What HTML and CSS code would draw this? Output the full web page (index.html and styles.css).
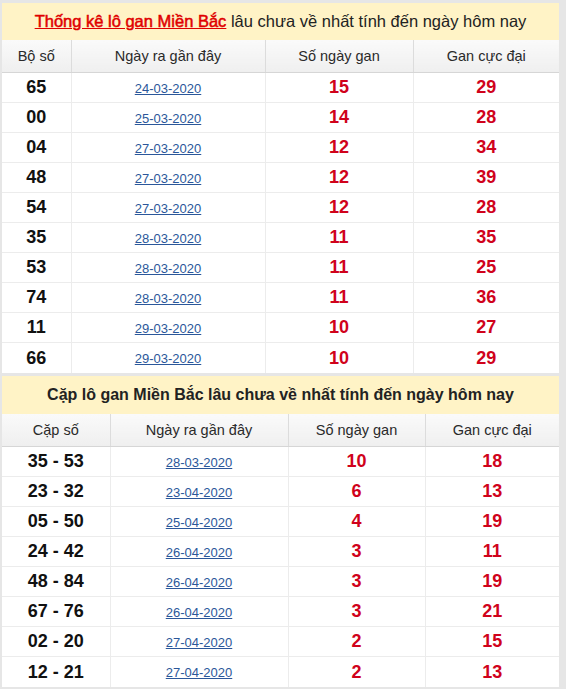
FILE: index.html
```html
<!DOCTYPE html>
<html lang="vi">
<head>
<meta charset="utf-8">
<link rel="stylesheet" href="styles.css">
</head>
<body>
<div class="page">
  <section class="block">
    <div class="title"><a class="title-link">Thống kê lô gan Miền Bắc</a> lâu chưa về nhất tính đến ngày hôm nay</div>
    <table class="grid">
      <colgroup><col class="c1a"><col class="c2a"><col class="c3a"><col class="c4a"></colgroup>
      <thead><tr><th>Bộ số</th><th>Ngày ra gần đây</th><th>Số ngày gan</th><th>Gan cực đại</th></tr></thead>
      <tbody>
        <tr><td class="num">65</td><td><a class="date">24-03-2020</a></td><td class="red">15</td><td class="red">29</td></tr>
        <tr><td class="num">00</td><td><a class="date">25-03-2020</a></td><td class="red">14</td><td class="red">28</td></tr>
        <tr><td class="num">04</td><td><a class="date">27-03-2020</a></td><td class="red">12</td><td class="red">34</td></tr>
        <tr><td class="num">48</td><td><a class="date">27-03-2020</a></td><td class="red">12</td><td class="red">39</td></tr>
        <tr><td class="num">54</td><td><a class="date">27-03-2020</a></td><td class="red">12</td><td class="red">28</td></tr>
        <tr><td class="num">35</td><td><a class="date">28-03-2020</a></td><td class="red">11</td><td class="red">35</td></tr>
        <tr><td class="num">53</td><td><a class="date">28-03-2020</a></td><td class="red">11</td><td class="red">25</td></tr>
        <tr><td class="num">74</td><td><a class="date">28-03-2020</a></td><td class="red">11</td><td class="red">36</td></tr>
        <tr><td class="num">11</td><td><a class="date">29-03-2020</a></td><td class="red">10</td><td class="red">27</td></tr>
        <tr><td class="num">66</td><td><a class="date">29-03-2020</a></td><td class="red">10</td><td class="red">29</td></tr>
      </tbody>
    </table>
  </section>
  <section class="block">
    <div class="title title-bold">Cặp lô gan Miền Bắc lâu chưa về nhất tính đến ngày hôm nay</div>
    <table class="grid">
      <colgroup><col class="c1b"><col class="c2b"><col class="c3b"><col class="c4b"></colgroup>
      <thead><tr><th>Cặp số</th><th>Ngày ra gần đây</th><th>Số ngày gan</th><th>Gan cực đại</th></tr></thead>
      <tbody>
        <tr><td class="num">35 - 53</td><td><a class="date">28-03-2020</a></td><td class="red">10</td><td class="red">18</td></tr>
        <tr><td class="num">23 - 32</td><td><a class="date">23-04-2020</a></td><td class="red">6</td><td class="red">13</td></tr>
        <tr><td class="num">05 - 50</td><td><a class="date">25-04-2020</a></td><td class="red">4</td><td class="red">19</td></tr>
        <tr><td class="num">24 - 42</td><td><a class="date">26-04-2020</a></td><td class="red">3</td><td class="red">11</td></tr>
        <tr><td class="num">48 - 84</td><td><a class="date">26-04-2020</a></td><td class="red">3</td><td class="red">19</td></tr>
        <tr><td class="num">67 - 76</td><td><a class="date">26-04-2020</a></td><td class="red">3</td><td class="red">21</td></tr>
        <tr><td class="num">02 - 20</td><td><a class="date">27-04-2020</a></td><td class="red">2</td><td class="red">15</td></tr>
        <tr><td class="num">12 - 21</td><td><a class="date">27-04-2020</a></td><td class="red">2</td><td class="red">13</td></tr>
      </tbody>
    </table>
  </section>
</div>
</body>
</html>
```

FILE: styles.css
```css
html, body {
  margin: 0;
  padding: 0;
  background: #e6e6e6;
}
body {
  font-family: "Liberation Sans", Arial, sans-serif;
  color: #222;
}
.page {
  padding: 3px 0 0 2px;
  width: 557px;
  display: flex;
  flex-direction: column;
  gap: 3px;
}
.block {
  background: #fff;
}
.title {
  background: #fff3c6;
  height: 37px;
  line-height: 37px;
  text-align: center;
  font-size: 16.5px;
  color: #222;
  white-space: nowrap;
}
.title-link {
  color: #e00000;
  font-weight: normal;
  -webkit-text-stroke: 0.5px #e00000;
  text-decoration: underline;
}
.title-bold {
  font-weight: bold;
  height: 38px;
  line-height: 38px;
  font-size: 16px;
}
.grid {
  width: 557px;
  border-collapse: collapse;
  table-layout: fixed;
}
.c1a { width: 69px; }
.c2a { width: 194px; }
.c3a { width: 148px; }
.c4a { width: 146px; }
.c1b { width: 108px; }
.c2b { width: 178px; }
.c3b { width: 137px; }
.c4b { width: 134px; }
.grid th {
  height: 32px;
  padding: 0;
  font-size: 14.5px;
  font-weight: normal;
  color: #2a2a2a;
  background: linear-gradient(#fafafa, #efefef);
  border-left: 1px solid #dcdcdc;
  border-bottom: 1px solid #d6d6d6;
}
.grid th:first-child { border-left: none; }
.grid td {
  height: 29px;
  padding: 0;
  text-align: center;
  border-left: 1px solid #ececec;
  border-bottom: 1px solid #ececec;
}
.grid td:first-child { border-left: none; }
.grid tr:last-child td { border-bottom: none; height: 30px; }
.num {
  font-size: 18px;
  font-weight: bold;
  color: #111;
}
.red {
  font-size: 18px;
  font-weight: bold;
  color: #d0021b;
}
.date {
  font-size: 13px;
  color: #2b579a;
  text-decoration: underline;
}
```
